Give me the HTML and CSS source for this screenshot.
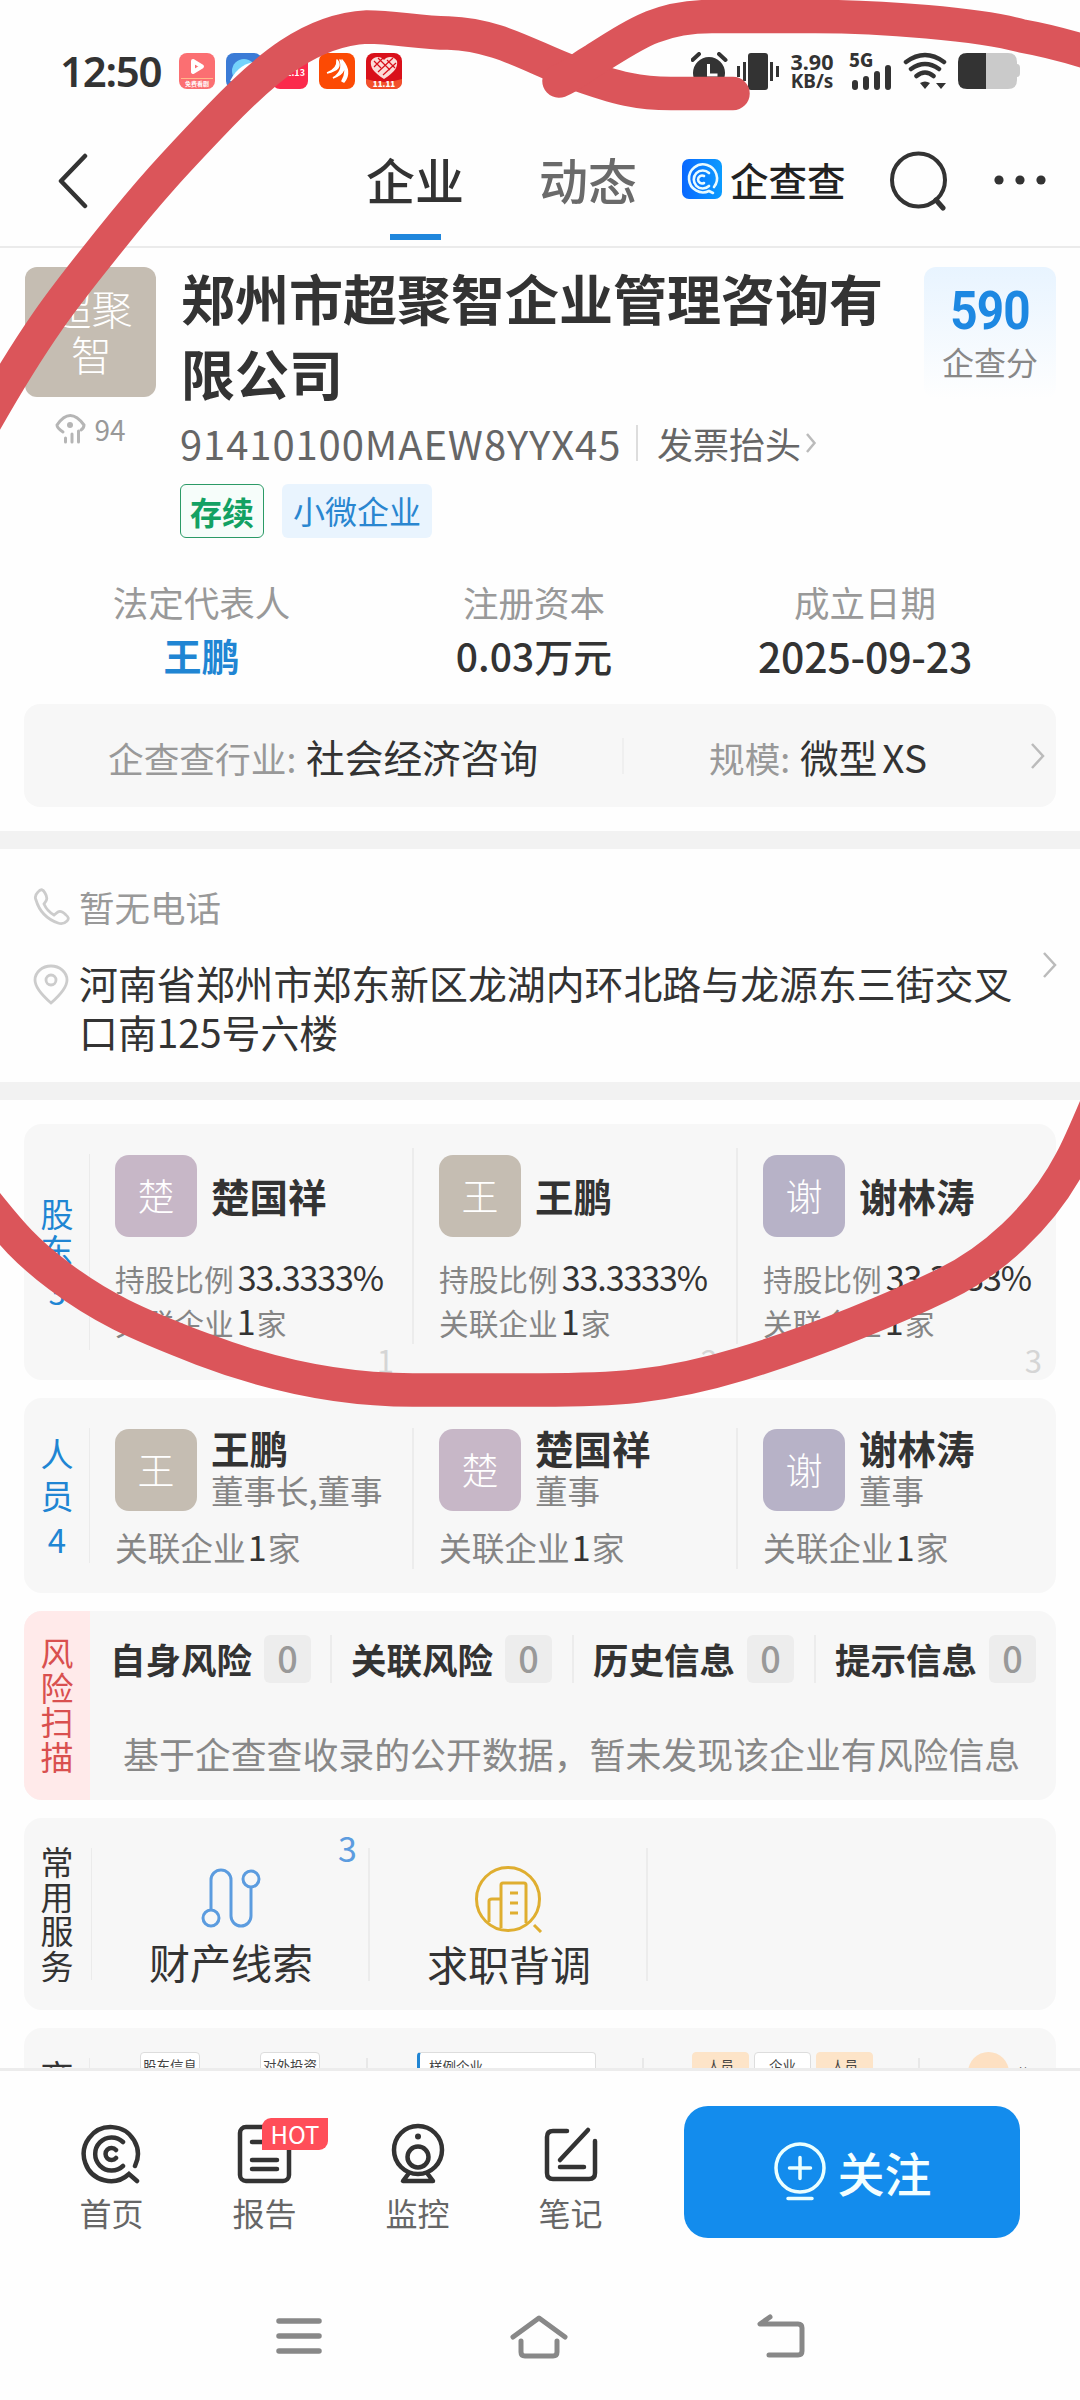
FILE: index.html
```html
<!DOCTYPE html>
<html lang="zh-CN">
<head>
<meta charset="utf-8">
<title>企查查</title>
<link rel="stylesheet" href="styles.css">
</head>
<body>
<div class="phone">
  <header class="status">
    <span class="clock">12:50</span>
    <div class="apps">
      <svg width="36" height="36" viewBox="0 0 36 36"><rect width="36" height="36" rx="8" fill="#fb6f72"/><path d="M14 8 23 13.500 14 19Z" fill="none" stroke="#fff" stroke-width="4" stroke-linejoin="round"/><path d="M2 25.500h32" stroke="#ffb98a"/><text x="18" y="33" font-size="6" font-weight="700" fill="#fff" text-anchor="middle">免费看剧</text></svg>
      <svg width="36" height="36" viewBox="0 0 36 36"><rect width="36" height="36" rx="8" fill="#3b7bd6"/><circle cx="18" cy="18" r="12" fill="#74d2fb"/><path d="M4 28C12 12 24 8 34 9C32 22 18 32 4 28Z" fill="#fff"/></svg>
      <svg width="36" height="36" viewBox="0 0 36 36"><rect width="36" height="36" rx="8" fill="#fb2a4c"/><text x="33" y="23" font-size="9" font-weight="700" fill="#fff" text-anchor="end">11.13</text></svg>
      <svg width="36" height="36" viewBox="0 0 36 36"><rect width="36" height="36" rx="8" fill="#fc4a04"/><path d="M8 20Q19 16 18 7Q25 16 8 20M14 25Q25 18 21 7Q31 19 14 25M23 28Q29 18 23 7Q33 19 25 29Z" fill="#fff" stroke="#fff" stroke-width="1.500" stroke-linejoin="round"/></svg>
      <svg width="36" height="36" viewBox="0 0 36 36"><rect width="36" height="36" rx="8" fill="#d9101a"/><path d="M0 26Q18 32 36 26V28Q36 36 28 36H8Q0 36 0 28Z" fill="#f2502b"/><path d="M18 26C7 19 4 14 5 8C8 3 15 3 18 7C21 3 28 3 31 8C32 14 29 19 18 26Z" fill="#fbdcd8"/><path d="M8 8l7 7M12 5l12 12M21 7l8 8M8 14L17 5M12 19L27 5M17 22L30 10" stroke="#d9101a" stroke-width="1.200"/><text x="18" y="34" font-size="8" font-weight="900" fill="#fff" text-anchor="middle">11.11</text></svg>
    </div>
    <div class="signals">
      <svg width="88" height="38" viewBox="0 0 88 38" fill="#333"><circle cx="18" cy="21" r="16"/><path d="M1.500 8 8 2M34.500 8 28 2" stroke="#333" stroke-width="4" stroke-linecap="round"/><path d="M17.500 12v11h9" fill="none" stroke="#fff" stroke-width="3"/><rect x="57" y="1" width="20" height="37" rx="3"/><path d="M47.500 14v11M53.500 10v19M80.500 10v19M86.500 14v11" stroke="#333" stroke-width="3"/></svg>
      <div class="speed"><b>3.90</b><b>KB/s</b></div>
      <svg width="44" height="38" viewBox="0 0 44 38"><text x="0" y="15" font-size="18" font-weight="800" fill="#333">5G</text><path d="M6 31v4M17 27v8M28 22v13M39 16v19" stroke="#333" stroke-width="6" stroke-linecap="round"/></svg>
      <svg width="44" height="38" viewBox="0 0 44 38"><path d="M3 10Q22-4 41 10M8 17Q22 7 36 17M13.500 24Q22 17 30.500 24" fill="none" stroke="#333" stroke-width="4.500" stroke-linecap="round"/><path d="M17 31Q22 28 27 31L22 37ZM33 31h10l-5 6Z" fill="#333"/></svg>
      <svg width="64" height="37" viewBox="0 0 64 37"><path d="M29 1H51Q60 1 60 10V12Q63 12 63 16V21Q63 25 60 25V28Q60 37 51 37H29Z" fill="#cacaca"/><path d="M29 1H10Q1 1 1 10V28Q1 37 10 37H29Z" fill="#333"/></svg>
    </div>
  </header>

  <nav class="topbar">
    <svg class="back" width="30" height="56" viewBox="0 0 30 56"><path d="M27 3 3 28 27 53" fill="none" stroke="#333" stroke-width="4.500" stroke-linecap="round" stroke-linejoin="round"/></svg>
    <div class="tab active">企业</div>
    <div class="tab">动态</div>
    <div class="brand">
      <svg width="40" height="40" viewBox="0 0 40 40"><defs><linearGradient id="lg"><stop stop-color="#0a68ff"/><stop offset="1" stop-color="#0a9cff"/></linearGradient></defs><rect width="40" height="40" rx="7" fill="url(#lg)"/><g fill="none" stroke="#e9fbff" stroke-width="2.600" stroke-linecap="round"><path d="M32 28A14 14 0 1 0 27 32L31 34M27 14A9 9 0 1 0 27 27M22 17A4 4 0 1 0 22 24"/></g></svg>
      <span>企查查</span>
    </div>
    <svg class="search" width="58" height="60" viewBox="0 0 58 60"><circle cx="28.500" cy="29" r="26.500" fill="none" stroke="#333" stroke-width="4"/><path d="M46 49l7 8" stroke="#333" stroke-width="5" stroke-linecap="round"/></svg>
    <svg class="more" width="52" height="10" viewBox="0 0 52 10" fill="#333"><circle cx="5" cy="5" r="4.600"/><circle cx="26" cy="5" r="4.600"/><circle cx="47" cy="5" r="4.600"/></svg>
  </nav>

  <main class="content">
    <section class="company">
      <div class="logo-col">
        <div class="logo">超聚<br>智</div>
        <div class="views"><svg width="31" height="30" viewBox="0 0 31 30" fill="none" stroke="#b5b5b5" stroke-width="3" stroke-linecap="round"><path d="M8 18Q2 14 2 11Q15-8 29 11Q29 14 26 16"/><circle cx="15" cy="11" r="3" fill="#b5b5b5" stroke="none"/><path d="M10.500 24v4M17 20v8M23.500 17v11"/></svg><span>94</span></div>
      </div>
      <div class="info">
        <h1>郑州市超聚智企业管理咨询有限公司</h1>
        <div class="code"><span class="num">91410100MAEW8YYX45</span><i></i><span class="invoice">发票抬头</span><svg width="12" height="20" viewBox="0 0 12 20"><path d="M2 1l7.500 9L2 19" fill="none" stroke="#bbb" stroke-width="2.500"/></svg></div>
        <div class="tags"><span class="tag green">存续</span><span class="tag blue">小微企业</span></div>
      </div>
      <div class="score"><b>590</b><span>企查分</span></div>
    </section>

    <section class="facts">
      <div><span>法定代表人</span><b class="link">王鹏</b></div>
      <div><span>注册资本</span><b>0.03万元</b></div>
      <div><span>成立日期</span><b class="date">2025-09-23</b></div>
    </section>

    <section class="industry">
      <p class="ind"><span>企查查行业:</span> 社会经济咨询</p><i></i>
      <p class="scale"><span>规模:</span> 微型<em>XS</em></p>
      <svg width="16" height="28" viewBox="0 0 16 28"><path d="M2 2l11 12L2 26" fill="none" stroke="#bbb" stroke-width="2.500"/></svg>
    </section>

    <section class="contact">
      <div class="line phone-line"><svg width="38" height="38" viewBox="0 0 38 38"><path d="M5 4Q9-1 12 5Q15 10 13 13L11 16Q14 23 21 27L25 24Q28 22 33 27Q37 30 34 33Q30 37 25 35Q8 29 3 12Q1 8 5 4Z" fill="none" stroke="#ccc" stroke-width="2.800"/></svg><span>暂无电话</span></div>
      <div class="line addr-line"><svg width="38" height="42" viewBox="0 0 38 42"><path d="M18 39Q2 25 2 16A16 14 0 0 1 34 16Q34 25 18 39Z" fill="none" stroke="#ccc" stroke-width="2.800"/><circle cx="18" cy="16" r="5" fill="none" stroke="#ccc" stroke-width="2.800"/></svg><p>河南省郑州市郑东新区龙湖内环北路与龙源东三街交叉口南<span class="n">125</span>号六楼</p></div>
      <svg class="go" width="16" height="28" viewBox="0 0 16 28"><path d="M2 2l11 12L2 26" fill="none" stroke="#bbb" stroke-width="2.500"/></svg>
    </section>

    <section class="cards">
      <div class="card holders">
        <div class="side link"><span>股东</span><span class="cnt">3</span></div>
        <div class="person"><div class="who"><div class="av pink">楚</div><h3>楚国祥</h3></div><p>持股比例<b class="pct">33.3333%</b></p><p>关联企业<b>1</b>家</p><em>1</em></div>
        <div class="person"><div class="who"><div class="av tan">王</div><h3>王鹏</h3></div><p>持股比例<b class="pct">33.3333%</b></p><p>关联企业<b>1</b>家</p><em>2</em></div>
        <div class="person"><div class="who"><div class="av lilac">谢</div><h3>谢林涛</h3></div><p>持股比例<b class="pct">33.3333%</b></p><p>关联企业<b>1</b>家</p><em>3</em></div>
      </div>

      <div class="card staff">
        <div class="side link"><span>人员</span><span class="cnt">4</span></div>
        <div class="person"><div class="who"><div class="av tan">王</div><div><h3>王鹏</h3><small>董事长,董事</small></div></div><p>关联企业<b>1</b>家</p></div>
        <div class="person"><div class="who"><div class="av pink">楚</div><div><h3>楚国祥</h3><small>董事</small></div></div><p>关联企业<b>1</b>家</p></div>
        <div class="person"><div class="who"><div class="av lilac">谢</div><div><h3>谢林涛</h3><small>董事</small></div></div><p>关联企业<b>1</b>家</p></div>
      </div>

      <div class="card risk">
        <div class="side red"><span>风险扫描</span></div>
        <div class="risk-body">
          <div class="risks"><div>自身风险<b>0</b></div><div>关联风险<b>0</b></div><div>历史信息<b>0</b></div><div>提示信息<b>0</b></div></div>
          <p>基于企查查收录的公开数据，暂未发现该企业有风险信息</p>
        </div>
      </div>

      <div class="card services">
        <div class="side"><span>常用服务</span></div>
        <div class="svc"><sup>3</sup><svg width="66" height="66" viewBox="0 0 66 66" fill="none" stroke="#5c9cdf" stroke-width="3"><circle cx="13" cy="53" r="8"/><circle cx="53" cy="14" r="8"/><path d="M13 45V15A10 10 0 0 1 33 15V51A10 10 0 0 0 53 51V22"/></svg><span>财产线索</span></div>
        <div class="svc"><svg width="68" height="68" viewBox="0 0 68 68" fill="none" stroke="#dfae30" stroke-width="3"><circle cx="33" cy="34" r="31.500"/><path d="M26 63V20Q26 18 28 18H49Q51 18 51 20V58M26 34H17Q14 34 14 36V57M35 28h8M35 38h8M35 48h8M59 60l7 7"/></svg><span>求职背调</span></div>
      </div>

      <div class="card charts">
        <div class="side"><span>商业</span></div>
        <div class="ch c1"><span class="bx">股东信息</span><span class="bx">对外投资</span></div>
        <div class="ch c2"><span class="bx sample">样例企业</span></div>
        <div class="ch c3"><span class="bx or">人员</span><span class="bx">企业</span><span class="bx or">人员</span></div>
        <div class="ch c4"><span class="ball">股东</span><span class="tiny">的</span></div>
      </div>
    </section>
  </main>

  <footer class="actions">
    <div class="act"><svg width="62" height="62" viewBox="0 0 62 62" fill="none" stroke="#333" stroke-width="4.500" stroke-linecap="round"><path d="M54 43A27 27 0 1 0 48 51L56 58M42 19A16.500 16.500 0 1 0 42 43M35 27A6 6 0 1 0 35 35"/></svg><span>首页</span></div>
    <div class="act"><svg width="62" height="62" viewBox="0 0 62 62" fill="none" stroke="#333" stroke-width="4.500" stroke-linecap="round"><rect x="6" y="4" width="49" height="54" rx="6"/><path d="M18 19h24M18 37h25M18 46h25"/></svg><span>报告</span><mark>HOT</mark></div>
    <div class="act"><svg width="62" height="62" viewBox="0 0 62 62" fill="none" stroke="#333" stroke-width="4.500" stroke-linecap="round" stroke-linejoin="round"><circle cx="31" cy="27" r="24"/><circle cx="31" cy="34" r="10.500"/><circle cx="31" cy="13.500" r="3" fill="#333" stroke="none"/><path d="M22 50l-6 8H46l-6-8"/></svg><span>监控</span></div>
    <div class="act"><svg width="62" height="62" viewBox="0 0 62 62" fill="none" stroke="#333" stroke-width="4.500" stroke-linecap="round"><path d="M27 8H13Q7 8 7 14V50Q7 56 13 56H49Q55 56 55 50V18M20 37 48 7M20 44H44"/></svg><span>笔记</span></div>
    <button><svg width="54" height="60" viewBox="0 0 54 60" fill="none" stroke="#eaffff" stroke-width="3.500" stroke-linecap="round"><circle cx="27" cy="26" r="24"/><path d="M16.500 26h21M27 15.500v21M15 56.500h24"/></svg>关注</button>
  </footer>

  <div class="sysnav">
    <svg width="46" height="44" viewBox="0 0 46 44"><path d="M3 6h40M3 21h40M3 36h40" stroke="#888" stroke-width="5.500" stroke-linecap="round"/></svg>
    <svg width="60" height="46" viewBox="0 0 60 46" fill="none" stroke="#888" stroke-width="5" stroke-linecap="round" stroke-linejoin="round"><path d="M4 23 30 4 56 23M12 27V38Q12 42 16 42H44Q48 42 48 38V27"/></svg>
    <svg width="50" height="46" viewBox="0 0 50 46" fill="none" stroke="#888" stroke-width="5" stroke-linecap="round" stroke-linejoin="round"><path d="M14 3 4 10H42Q46 10 46 14V37Q46 41 42 41H13"/></svg>
  </div>

  <svg class="marker" width="1080" height="2400" viewBox="0 0 1080 2400" fill="none" stroke="#db555a" stroke-width="33.500" stroke-linecap="round" stroke-linejoin="round">
    <path d="M-16 424C40 325 70 290 110 240S172 166 219 117S310 30 367 27C395 27 420 33 448 33C500 35 530 57 574 73S640 93.500 671 93.500L733 93.500"/>
    <path d="M559 81C572 76 580 68 594 60C630 38 655 16.500 712 16.500L815 16.500C880 16.500 980 24 1022 36C1045 40 1065 45 1100 56"/>
    <path d="M1105 1085C1090 1120 1080 1145 1071 1161C1040 1220 990 1262 945 1284S820 1340 741 1364S610 1390 540 1390L413 1390C340 1390 270 1375 202 1349S100 1307 59 1276S5 1225-20 1195"/>
  </svg>
</div>
</body>
</html>
```
FILE: styles.css
```css
* { box-sizing: border-box; margin: 0; padding: 0; }
body { width: 1080px; height: 2400px; overflow: hidden; background: #fefefe; color: #333; font-family: "Noto Sans CJK SC", sans-serif; }
svg { display: block; flex: none; font-family: "Noto Sans CJK SC", sans-serif; }
i, em { font-style: normal; }
.link { color: #2085d3; }
.phone { position: relative; width: 1080px; height: 2400px; overflow: hidden; display: flex; flex-direction: column; }

.status { height: 118px; flex: none; display: flex; align-items: flex-start; padding: 52px 59px 0 60px; }
.clock { width: 119px; font: 600 42px/38px "Noto Sans", sans-serif; letter-spacing: -1.3px; }
.apps { display: flex; gap: 10.700px; padding-top: 1px; }
.signals { margin-left: auto; display: flex; }
.signals > svg { margin-left: 10px; }
.signals > svg:first-child { margin: 0; }
.speed { width: 50px; margin-left: 8px; margin-right: 2px; display: flex; flex-direction: column; align-items: center; font-family: "Noto Sans", sans-serif; font-size: 19px; line-height: 20px; white-space: nowrap; }
.speed b { font-weight: 700; }
.speed b:first-child { font-size: 21.500px; line-height: 19px; }

.topbar { height: 130px; flex: none; display: flex; align-items: center; padding: 0 34px 6px 58px; border-bottom: 2px solid #ebebeb; }
.tab { font-size: 49px; line-height: 122px; height: 122px; margin-left: 75px; color: #6a6a6a; font-weight: 500; }
.tab.active { position: relative; margin-left: 278px; color: #333; }
.tab.active::after { content: ""; position: absolute; left: 24px; bottom: 0; width: 51px; height: 6px; background: #1f86dc; }
.brand { display: flex; align-items: center; gap: 8px; margin-left: 45px; font-size: 38.500px; font-weight: 500; color: #222; white-space: nowrap; }
.brand span { line-height: 50px; }
.search { margin-left: 44px; margin-top: 3px; }
.more { margin-left: 46px; margin-top: 2px; }
.back { margin-top: 3px; }

.content { height: 1820px; flex: none; overflow: hidden; }
.company { height: 328px; display: flex; padding: 19px 24px 0 25px; }
.logo-col { width: 131px; }
.logo { height: 130px; border-radius: 12px; background: #c5bdb2; color: #fff; text-align: center; font-size: 41px; font-weight: 300; line-height: 46px; padding: 17px 0 0 2px; }
.views { display: flex; justify-content: center; align-items: center; gap: 8px; margin-top: 14px; font-size: 28px; line-height: 36px; color: #999; font-weight: 400; }
.info { flex: 1; padding-left: 25px; }
h1 { width: 705px; font-size: 54px; line-height: 75px; font-weight: 600; margin-top: -7px; }
.code { display: flex; align-items: center; height: 46px; margin-top: 10px; color: #666; white-space: nowrap; }
.num { font-size: 40px; font-weight: 400; line-height: 46px; width: 436px; letter-spacing: 0.9px; margin-left: -1px; }
.code i { width: 2px; height: 36px; background: #ddd; margin: 0 19px 0 20px; }
.invoice { font-size: 36px; line-height: 46px; margin-right: 4px; }
.tags { display: flex; gap: 18px; margin-top: 18px; margin-left: -1px; }
.tag { height: 54px; border-radius: 6px; font-size: 32px; line-height: 52px; padding: 0 11px; }
.tag.green { border: 1.500px solid #2b9a66; background: #f6fdfa; color: #13a163; font-weight: 700; padding: 0 9px; }
.tag.blue { background: #e9f4fe; color: #2a86d0; }
.score { width: 132px; height: 132px; border-radius: 12px; background: linear-gradient(#e8f4ff, #fefefe); text-align: center; display: flex; flex-direction: column; }
.score b { font: 700 53px/50px Roboto, sans-serif; color: #1d88e2; margin-top: 19px; letter-spacing: -1px; transform: scaleX(0.9); }
.score span { font-size: 32px; line-height: 46px; color: #888; margin-top: 2px; }

.facts { height: 128px; display: flex; text-align: center; padding: 2px 24px 0 23px; }
.facts div { display: flex; flex-direction: column; width: 308px; }
.facts div:first-child { width: 357px; }
.facts div:nth-child(3) { width: 354px; }
.facts span { font-size: 35.500px; line-height: 48px; color: #999; }
.facts b { font-size: 39px; line-height: 50px; font-weight: 500; margin-top: 4px; }
.facts .link { font-weight: 700; font-size: 38px; }
.facts .date { font-size: 41px; letter-spacing: -0.2px; }

.industry { height: 103px; margin: 0 24px; border-radius: 16px; background: #f7f7f7; display: flex; align-items: center; padding: 0 10px 0 84px; font-size: 38.700px; white-space: nowrap; }
.industry span { font-size: 35.700px; color: #999; margin-right: 1px; }
.ind { width: 514px; }
.industry i { width: 2px; height: 36px; background: #efefef; }
.scale { margin-left: 85px; flex: 1; }
.scale em { margin-left: 5px; }

.contact { position: relative; margin-top: 24px; height: 269px; border-top: 18px solid #f2f2f2; border-bottom: 18px solid #f2f2f2; padding: 34px 33px 0; }
.line { display: flex; }
.line svg { margin-right: 8px; }
.phone-line { font-size: 35.500px; line-height: 48px; color: #999; height: 48px; }
.phone-line svg { margin-top: 5px; }
.addr-line { margin-top: 27px; }
.addr-line svg { margin-top: 6px; }
.addr-line p { width: 940px; font-size: 38.900px; line-height: 49px; }
.go { position: absolute; right: 22px; top: 102px; }

.cards { display: flex; flex-direction: column; gap: 18px; padding: 24px 24px 0; }
.card { border-radius: 18px; background: #f7f7f7; display: flex; overflow: hidden; flex: none; }
.side { position: relative; width: 66px; flex: none; display: flex; flex-direction: column; align-items: center; justify-content: center; font-size: 33px; }
.side span { width: 34px; word-break: break-all; line-height: 34.500px; text-align: center; }
.side::after { content: ""; position: absolute; right: 0; top: 30px; bottom: 30px; width: 1.500px; background: #ebebeb; }
.person { position: relative; width: 324px; flex: none; padding: 31px 0 0 25px; font-weight: 400; color: #858585; white-space: nowrap; }
.person + .person::before { content: ""; position: absolute; left: -2px; top: 24px; width: 2px; height: 196px; background: #ececec; }
.who { display: flex; align-items: center; gap: 14px; height: 82px; }
.av { width: 82px; height: 82px; border-radius: 14px; color: #fff; font-size: 37px; line-height: 80px; text-align: center; flex: none; font-weight: 300; }
.pink { background: #c7b7c7; }
.tan { background: #c5bdb2; }
.lilac { background: #b7b2c7; }
h3 { font-size: 38.500px; font-weight: 600; line-height: 42px; color: #333; margin-top: -3px; }
.person b { font-weight: 400; color: #333; }

.holders { height: 256px; }
.holders .side span { line-height: 36px; }
.holders .side .cnt { line-height: 36px; font-size: 31px; margin-top: 7px; }
.holders p { font-size: 29.700px; line-height: 44px; height: 44px; }
.holders .who { margin-bottom: 20px; }
.holders p b { font-size: 34px; line-height: 40px; margin: 0 1px 0 3px; }
.holders p .pct { letter-spacing: -1.1px; margin-left: 4px; }
.person em { position: absolute; right: 20px; bottom: -4px; font-size: 31px; line-height: 48px; color: #d5d5d5; }
.staff { height: 195px; }
.staff .side span { line-height: 42px; }
.staff .side .cnt { margin-top: 2px; }
.staff .person + .person::before { top: 30px; height: 141px; }
.staff h3 { line-height: 42px; margin-top: -4px; }
.staff small { display: block; font-size: 32.500px; line-height: 43px; height: 42px; }
.staff .who { margin-bottom: 12px; }
.staff p { font-size: 32.700px; line-height: 48px; height: 48px; }
.staff p b { font-size: 34px; line-height: 40px; margin: 0 1px 0 2px; }

.risk { height: 189px; }
.red { background: #ffeaea; color: #d9504f; padding-bottom: 3px; }
.red::after { display: none; }
.risk-body { flex: 1; white-space: nowrap; }
.risks { display: flex; padding: 24px 0 0; height: 72px; }
.risks div { width: 242px; flex: none; padding-left: 19px; display: flex; align-items: center; gap: 12px; font-size: 35.500px; line-height: 44px; font-weight: 700; border-left: 2px solid #ececec; }
.risks div:first-child { width: 240px; border-color: transparent; padding-left: 18px; }
.risks b { width: 47px; height: 48px; border-radius: 6px; background: #ededed; color: #999; text-align: center; line-height: 45px; font-size: 36px; font-weight: 500; }
.risk-body p { font-size: 35.900px; line-height: 50px; color: #888; padding-left: 33px; margin-top: 45px; font-weight: 400; }

.services { height: 192px; }
.services .side { padding-bottom: 2px; }
.services .side::after { right: -2px; }
.services .side + .svc { margin-left: 2px; }
.svc { position: relative; width: 278px; flex: none; display: flex; flex-direction: column; align-items: center; padding-top: 47px; }
.svc::after { content: ""; position: absolute; right: 0; top: 30px; width: 2px; height: 133px; background: #ececec; }
.svc span { font-size: 41px; line-height: 50px; margin-top: 5px; }
.svc sup { position: absolute; right: 13px; top: 5px; font-size: 34px; line-height: 50px; color: #5c9cdf; width: 19px; }

.charts { height: 192px; font-size: 13.500px; line-height: 24px; }
.charts .side { justify-content: flex-start; padding-top: 30px; }
.ch { width: 276px; flex: none; padding-top: 24px; display: flex; height: 120px; position: relative; }
.ch + .ch::before { content: ""; position: absolute; left: 0; top: 30px; width: 1.500px; height: 90px; background: #e8e8e8; }
.c1 { gap: 60px; padding-left: 50px; }
.c2 { padding-left: 51px; }
.c3 { gap: 5px; padding-left: 50px; }
.c4 { padding-left: 50px; gap: 8px; width: 140px; }
.bx { height: 60px; width: 60px; text-align: center; background: #fff; border: 1.500px solid #ddd; border-radius: 4px; color: #444; white-space: nowrap; }
.c3 .bx { width: 57px; }
.bx.sample { width: 179px; border-left: 3px solid #2085d3; text-align: left; padding-left: 9px; line-height: 26px; }
.bx.or { background: #fde4c8; border-color: #fde4c8; }
.ball { width: 41px; height: 41px; border-radius: 50%; background: #fde0c2; text-align: center; line-height: 44px; }
.tiny { line-height: 42px; }

.actions { height: 212px; flex: none; border-top: 3px solid #ececec; background: #fefefe; display: flex; padding: 35px 60px 0 35px; }
.act { position: relative; width: 153px; display: flex; flex-direction: column; align-items: center; padding-top: 17px; color: #666; }
.act span { font-size: 32px; line-height: 46px; margin-top: 4px; }
mark { position: absolute; left: 74px; top: 12px; width: 66px; height: 32px; border-radius: 9px 0 9px 0; background: #ff4e59; color: #fff; font-size: 24px; line-height: 31px; text-align: center; }
.actions button { margin-left: auto; width: 336px; height: 132px; border: 0; border-radius: 24px; background: #138ced; color: #f4ffff; font: 500 47px/60px "Noto Sans CJK SC", sans-serif; display: flex; justify-content: center; align-items: center; gap: 11px; }
.sysnav { height: 114px; display: flex; align-items: center; justify-content: center; gap: 187px; padding-left: 2px; }
.marker { position: absolute; left: 0; top: 0; pointer-events: none; }
```
